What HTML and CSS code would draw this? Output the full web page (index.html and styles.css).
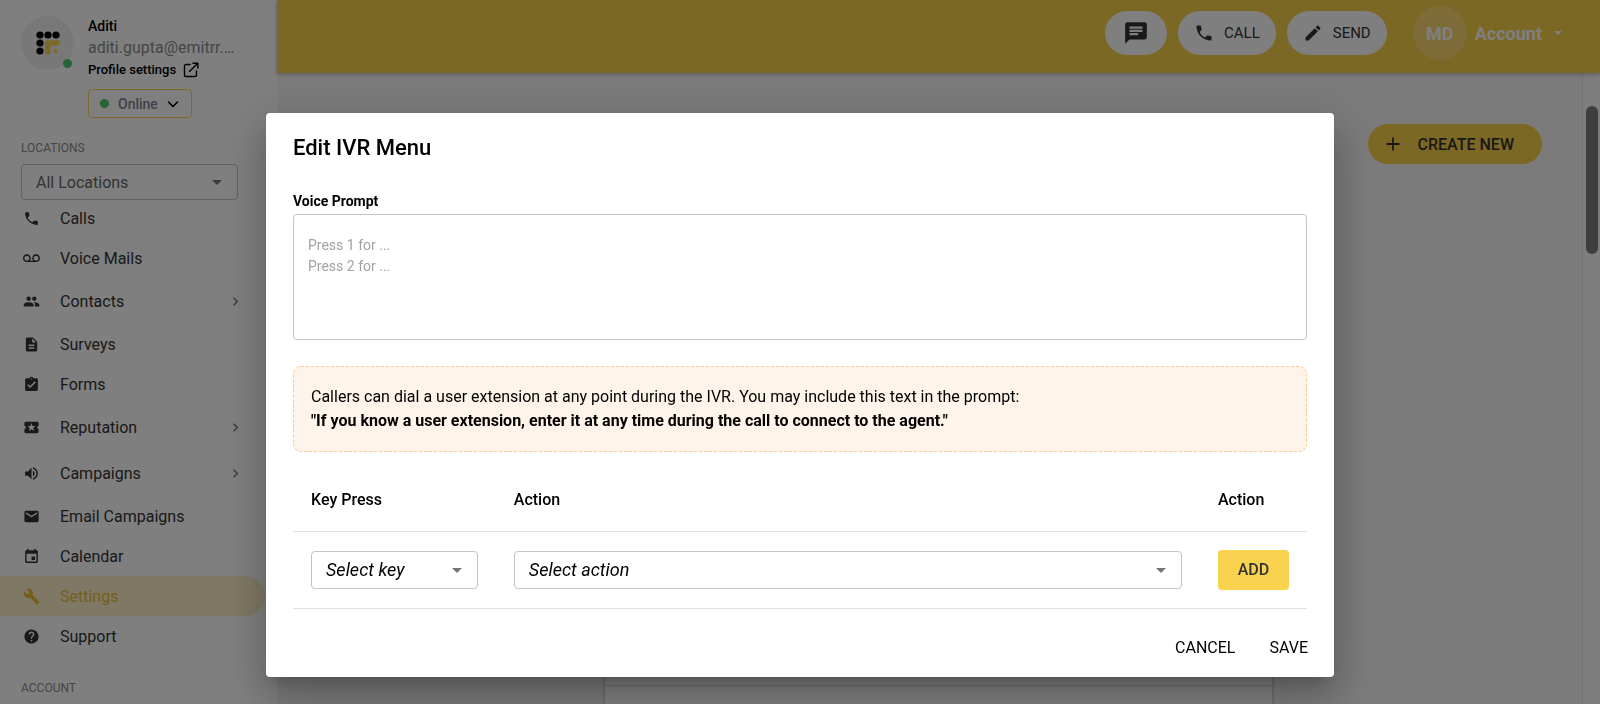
FILE: index.html
```html
<!DOCTYPE html>
<html lang="en">
<head>
<meta charset="utf-8">
<title>Edit IVR Menu</title>
<link rel="stylesheet" href="styles.css">
</head>
<body>
<div class="app">
  <aside class="sidebar">
    <div class="profile">
      <div class="avatar">
        <svg width="24" height="24" viewBox="0 0 24 24" aria-hidden="true">
          <g fill="#000"><circle cx="4" cy="4" r="3.600"/><circle cx="12" cy="4" r="3.600"/><circle cx="20" cy="4" r="3.600"/><circle cx="4" cy="12" r="3.600"/><circle cx="4" cy="20" r="3.600"/></g>
          <path d="M11.800 20.700V12H21" fill="none" stroke="#f9d24e" stroke-width="5.400" stroke-linecap="round" stroke-linejoin="round"/>
          <circle cx="19.500" cy="20" r="2" fill="#f9d24e"/>
        </svg>
        <span class="presence"></span>
      </div>
      <div class="profile-info">
        <span class="profile-name">Aditi</span>
        <span class="profile-email">aditi.gupta@emitrr.…</span>
        <a class="profile-link" href="#">Profile settings
          <svg width="16" height="16" viewBox="0 0 16 16" fill="none" stroke="currentColor" stroke-width="1.400" stroke-linecap="round" stroke-linejoin="round" aria-hidden="true"><path d="M7 2.500H3A1.500 1.500 0 0 0 1.500 4v9A1.500 1.500 0 0 0 3 14.500h9a1.500 1.500 0 0 0 1.500-1.500V9M10 1.200h4.800V6M14.500 1.500 6.500 9.500"/></svg>
        </a>
        <button class="status" type="button"><span class="dot"></span>Online
          <svg width="12" height="12" viewBox="0 0 12 12" fill="none" stroke="#000" stroke-width="1.600" stroke-linecap="round" stroke-linejoin="round" aria-hidden="true"><path d="M1.500 4 6 8.500 10.500 4"/></svg>
        </button>
      </div>
    </div>
    <label class="section-title" for="location">LOCATIONS</label>
    <div class="select location">
      <select id="location"><option>All Locations</option></select>
      <svg width="24" height="24" viewBox="0 0 24 24" aria-hidden="true"><path d="m7 10 5 5 5-5z"/></svg>
    </div>
    <nav class="nav">
      <a href="#"><svg viewBox="0 0 24 24"><path d="M6.620 10.790c1.440 2.830 3.760 5.140 6.590 6.590l2.200-2.200c.27-.27.67-.36 1.020-.24 1.120.37 2.330.57 3.570.57.55 0 1 .45 1 1V20c0 .55-.45 1-1 1-9.390 0-17-7.610-17-17 0-.55.45-1 1-1h3.500c.55 0 1 .45 1 1 0 1.250.2 2.450.57 3.570.11.35.03.74-.25 1.020z"/></svg>Calls</a>
      <a href="#"><svg viewBox="0 0 24 24"><path d="M18.500 6C15.460 6 13 8.460 13 11.500c0 1.330.47 2.550 1.260 3.500H9.740c.79-.95 1.260-2.170 1.260-3.500C11 8.460 8.540 6 5.500 6S0 8.460 0 11.500 2.460 17 5.500 17h13c3.040 0 5.500-2.460 5.500-5.500S21.540 6 18.500 6m-13 9C3.570 15 2 13.430 2 11.500S3.570 8 5.500 8 9 9.570 9 11.500 7.430 15 5.500 15m13 0c-1.930 0-3.500-1.570-3.500-3.500S16.570 8 18.500 8 22 9.570 22 11.500 20.430 15 18.500 15"/></svg>Voice Mails</a>
      <a href="#" class="group"><svg viewBox="0 0 24 24"><path d="M16 11c1.660 0 2.990-1.340 2.990-3S17.660 5 16 5s-3 1.340-3 3 1.340 3 3 3m-8 0c1.660 0 2.990-1.340 2.990-3S9.660 5 8 5 5 6.340 5 8s1.340 3 3 3m0 2c-2.330 0-7 1.170-7 3.500V19h14v-2.500c0-2.330-4.670-3.500-7-3.500m8 0c-.29 0-.62.02-.97.05 1.160.84 1.970 1.970 1.970 3.450V19h6v-2.500c0-2.330-4.670-3.500-7-3.500"/></svg>Contacts<svg class="chevron" viewBox="0 0 24 24"><path d="M10 6 8.590 7.410 13.170 12l-4.580 4.590L10 18l6-6z"/></svg></a>
      <a href="#"><svg viewBox="0 0 24 24"><path d="M14 2H6c-1.100 0-1.990.9-1.990 2L4 20c0 1.100.89 2 1.990 2H18c1.100 0 2-.9 2-2V8zm2 16H8v-2h8zm0-4H8v-2h8zm-3-5V3.500L18.500 9z"/></svg>Surveys</a>
      <a href="#"><svg viewBox="0 0 24 24"><path d="M19 3h-4.180C14.400 1.840 13.300 1 12 1s-2.400.84-2.820 2H5c-1.100 0-2 .9-2 2v14c0 1.100.9 2 2 2h14c1.100 0 2-.9 2-2V5c0-1.100-.9-2-2-2m-7 0c.55 0 1 .45 1 1s-.45 1-1 1-1-.45-1-1 .45-1 1-1m-2 14-4-4 1.410-1.410L10 14.170l6.590-6.590L18 9z"/></svg>Forms</a>
      <a href="#" class="group"><svg viewBox="0 0 24 24"><path d="M20 12c0-1.100.9-2 2-2V6c0-1.100-.9-2-2-2H4c-1.100 0-1.990.9-1.990 2v4c1.100 0 1.990.9 1.990 2s-.89 2-2 2v4c0 1.100.9 2 2 2h16c1.100 0 2-.9 2-2v-4c-1.100 0-2-.9-2-2m-4.420 4.800L12 14.500l-3.580 2.300 1.080-4.120-3.290-2.690 4.240-.25L12 5.800l1.540 3.950 4.240.25-3.290 2.690z"/></svg>Reputation<svg class="chevron" viewBox="0 0 24 24"><path d="M10 6 8.590 7.410 13.170 12l-4.580 4.590L10 18l6-6z"/></svg></a>
      <a href="#" class="group"><svg viewBox="0 0 24 24"><path d="M3 9v6h4l5 5V4L7 9zm13.500 3c0-1.770-1.020-3.290-2.500-4.030v8.050c1.480-.73 2.500-2.250 2.500-4.020M14 3.230v2.060c2.890.86 5 3.540 5 6.710s-2.110 5.850-5 6.710v2.060c4.010-.91 7-4.490 7-8.770s-2.990-7.860-7-8.770"/></svg>Campaigns<svg class="chevron" viewBox="0 0 24 24"><path d="M10 6 8.590 7.410 13.170 12l-4.580 4.590L10 18l6-6z"/></svg></a>
      <a href="#"><svg viewBox="0 0 24 24"><path d="M20 4H4c-1.100 0-1.990.9-1.990 2L2 18c0 1.100.9 2 2 2h16c1.100 0 2-.9 2-2V6c0-1.100-.9-2-2-2m0 4-8 5-8-5V6l8 5 8-5z"/></svg>Email Campaigns</a>
      <a href="#"><svg viewBox="0 0 24 24"><path d="M17 12h-5v5h5zM16 1v2H8V1H6v2H5c-1.110 0-1.990.9-1.990 2L3 19c0 1.100.89 2 2 2h14c1.100 0 2-.9 2-2V5c0-1.100-.9-2-2-2h-1V1zm3 18H5V8h14z"/></svg>Calendar</a>
      <a href="#" class="active"><svg viewBox="0 0 24 24"><path d="m22.700 19-9.100-9.100c.9-2.300.4-5-1.500-6.900-2-2-5-2.400-7.400-1.300L9 6 6 9 1.600 4.700C.4 7.100.9 10.100 2.900 12.100c1.900 1.900 4.600 2.400 6.900 1.500l9.100 9.100c.4.400 1 .4 1.400 0l2.300-2.300c.5-.4.5-1.100.1-1.400"/></svg>Settings</a>
      <a href="#"><svg viewBox="0 0 24 24"><path d="M12 2C6.480 2 2 6.480 2 12s4.480 10 10 10 10-4.480 10-10S17.520 2 12 2m1 17h-2v-2h2zm2.070-7.750-.9.920C13.450 12.900 13 13.500 13 15h-2v-.5c0-1.100.45-2.100 1.170-2.830l1.240-1.260c.37-.36.59-.86.59-1.410 0-1.100-.9-2-2-2s-2 .9-2 2H8c0-2.210 1.790-4 4-4s4 1.790 4 4c0 .88-.36 1.680-.93 2.250"/></svg>Support</a>
    </nav>
    <span class="section-title account-title">ACCOUNT</span>
  </aside>

  <div class="page">
    <header class="topbar">
      <button class="pill messages" type="button" aria-label="Messages"><svg width="26" height="26" viewBox="0 0 24 24" aria-hidden="true"><path d="M20 2H4c-1.100 0-1.990.9-1.990 2L2 22l4-4h14c1.100 0 2-.9 2-2V4c0-1.100-.9-2-2-2M6 9h12v2H6zm8 5H6v-2h8zm4-6H6V6h12z"/></svg></button>
      <button class="pill" type="button"><svg width="20" height="20" viewBox="0 0 24 24" aria-hidden="true"><path d="M6.620 10.790c1.440 2.830 3.760 5.140 6.590 6.590l2.200-2.200c.27-.27.67-.36 1.020-.24 1.120.37 2.330.57 3.570.57.55 0 1 .45 1 1V20c0 .55-.45 1-1 1-9.390 0-17-7.610-17-17 0-.55.45-1 1-1h3.500c.55 0 1 .45 1 1 0 1.250.2 2.450.57 3.570.11.35.03.74-.25 1.020z"/></svg>CALL</button>
      <button class="pill" type="button"><svg width="20" height="20" viewBox="0 0 24 24" aria-hidden="true"><path d="M3 17.250V21h3.750L17.810 9.940l-3.750-3.750zM20.710 7.040c.39-.39.39-1.020 0-1.410l-2.340-2.340a.996.996 0 0 0-1.410 0l-1.830 1.830 3.750 3.750z"/></svg>SEND</button>
      <button class="account" type="button"><span class="initials">MD</span>Account
        <svg width="8" height="4" viewBox="0 0 8 4" aria-hidden="true"><path d="M0 0h8L4 4z"/></svg>
      </button>
    </header>
    <main class="content">
      <button class="create" type="button"><svg width="22" height="22" viewBox="0 0 24 24" aria-hidden="true"><path d="M19 13h-6v6h-2v-6H5v-2h6V5h2v6h6v2z"/></svg>CREATE NEW</button>
      <div class="card"><div class="card-head"></div></div>
      <div class="scrollbar"><div class="thumb"></div></div>
    </main>
  </div>
</div>

<div class="backdrop">
  <div class="dialog" role="dialog" aria-modal="true" aria-labelledby="dialog-title">
    <h2 id="dialog-title">Edit IVR Menu</h2>
    <label class="field-label" for="prompt">Voice Prompt</label>
    <textarea id="prompt" placeholder="Press 1 for ...&#10;Press 2 for ..."></textarea>
    <div class="note">
      <p>Callers can dial a user extension at any point during the IVR. You may include this text in the prompt:</p>
      <p><strong>"If you know a user extension, enter it at any time during the call to connect to the agent."</strong></p>
    </div>
    <table class="keys">
      <thead>
        <tr><th class="col-key">Key Press</th><th>Action</th><th class="col-add">Action</th></tr>
      </thead>
      <tbody>
        <tr>
          <td><div class="select"><select aria-label="Key press"><option>Select key</option></select><svg width="24" height="24" viewBox="0 0 24 24" aria-hidden="true"><path d="m7 10 5 5 5-5z"/></svg></div></td>
          <td><div class="select"><select aria-label="Action"><option>Select action</option></select><svg width="24" height="24" viewBox="0 0 24 24" aria-hidden="true"><path d="m7 10 5 5 5-5z"/></svg></div></td>
          <td><button class="add" type="button">ADD</button></td>
        </tr>
      </tbody>
    </table>
    <div class="actions">
      <button type="button">CANCEL</button>
      <button type="button">SAVE</button>
    </div>
  </div>
</div>
</body>
</html>
```

FILE: styles.css
```css
* { box-sizing: border-box; }

body {
  margin: 0;
  font-family: Roboto, "Liberation Sans", sans-serif;
  font-size: 16px;
  color: #000;
}

button, select, textarea { font: inherit; color: inherit; margin: 0; }
button { border: 0; background: none; padding: 0; }
a { color: inherit; text-decoration: none; }
svg { flex: none; fill: currentColor; }

.app { display: flex; height: 100vh; overflow: hidden; }

/* Sidebar */
.sidebar {
  flex: none;
  display: flex;
  flex-direction: column;
  width: 277px;
  overflow: hidden;
  background: #fff;
}

.profile { display: flex; gap: 14px; padding: 16px 20px 0 21px; }

.avatar {
  position: relative;
  flex: none;
  display: flex;
  align-items: center;
  justify-content: center;
  width: 53px;
  height: 54px;
  border-radius: 50%;
  background: #f0f0f0;
}

.presence {
  position: absolute;
  right: 2px;
  bottom: 2px;
  width: 9px;
  height: 9px;
  border-radius: 50%;
  background: #4cca6b;
}

.profile-info { display: flex; flex-direction: column; align-items: flex-start; min-width: 0; }
.profile-name { font-size: 14px; font-weight: 500; line-height: 20px; }
.profile-email { white-space: nowrap; line-height: 24px; color: #8c8c8c; }
.profile-link {
  display: flex;
  align-items: center;
  gap: 7px;
  font-size: 13px;
  font-weight: 500;
  line-height: 20px;
}
.profile-link svg { fill: none; }

.status {
  display: flex;
  align-items: center;
  gap: 9px;
  height: 29px;
  margin-top: 9px;
  padding: 0 12px 0 11px;
  border: 1px solid #f9d24e;
  border-radius: 4px;
  font-size: 14px;
  font-weight: 500;
  color: #7d8492;
}
.status svg { fill: none; }
.dot { width: 9px; height: 9px; border-radius: 50%; background: #4cca6b; }

.section-title { padding-left: 21px; font-size: 12px; line-height: 16px; color: #8c8c8c; }
.profile + .section-title { margin-top: 22px; }

.select { display: grid; align-items: center; }
.select select, .select svg { grid-area: 1 / 1; }
.select select {
  appearance: none;
  width: 100%;
  height: 38px;
  padding: 0 40px 0 14px;
  border: 1px solid #c4c4c4;
  border-radius: 4px;
  background: transparent;
}
.select svg { justify-self: end; margin-right: 9px; color: #757575; pointer-events: none; }

.location { margin: 8px 39px 0 21px; }
.location select { height: 36px; color: #666; }

.nav { display: flex; flex-direction: column; margin: -2px 12px 0 0; }
.nav a {
  display: flex;
  align-items: center;
  gap: 20px;
  height: 40px;
  padding: 0 21px 0 23px;
  border-radius: 0 20px 20px 0;
  color: #333;
}
.nav svg { width: 17px; height: 17px; }
.nav .group { height: 46px; }
.nav .chevron { margin-left: auto; color: #757575; }
.nav .active { background: #fff0c9; color: #e9bd38; }
.account-title { margin-top: 24px; }

/* Page */
.page { flex: 1; display: flex; flex-direction: column; min-width: 0; }

.topbar {
  z-index: 1;
  display: flex;
  align-items: center;
  justify-content: flex-end;
  gap: 11px;
  height: 73px;
  padding: 0 38px 7px 0;
  background: #f9d04a;
  box-shadow: 0 1px 4px rgba(0, 0, 0, .3);
}

.pill {
  display: flex;
  align-items: center;
  gap: 10px;
  height: 44px;
  padding: 0 16px;
  border-radius: 22px;
  background: #fff;
  font-size: 15px;
  color: #333;
}
.messages { padding: 0 18px; }

.account {
  display: flex;
  align-items: center;
  gap: 8px;
  margin-left: 15px;
  font-size: 18px;
  font-weight: 700;
  color: #fff;
}
.account svg { margin-left: 4px; }
.initials {
  display: flex;
  align-items: center;
  justify-content: center;
  width: 54px;
  height: 54px;
  border-radius: 50%;
  background: #fbd86f;
}

.content {
  position: relative;
  flex: 1;
  display: flex;
  flex-direction: column;
  min-height: 0;
  padding-top: 51px;
  background: #f6f6f6;
}

.create {
  align-self: flex-end;
  display: flex;
  align-items: center;
  gap: 14px;
  height: 40px;
  margin-right: 58px;
  padding: 0 28px 0 14px;
  border-radius: 20px;
  background: #f9d04a;
  font-weight: 500;
  color: #333;
}

.card {
  flex: 1;
  align-self: center;
  width: 667px;
  margin-top: 36px;
  background: #fff;
  box-shadow: 0 0 4px rgba(0, 0, 0, .3);
}
.card-head { height: 486px; border-bottom: 1px solid #ddd; }

.scrollbar {
  position: absolute;
  inset: 0 0 0 auto;
  width: 18px;
  padding: 33px 2px 0 3px;
  border-left: 1px solid #e4e4e4;
  background: #fafafa;
}
.thumb { height: 148px; border-radius: 6px; background: #7c7c7c; }

/* Dialog */
.backdrop {
  position: fixed;
  inset: 0;
  z-index: 2;
  display: flex;
  align-items: flex-start;
  justify-content: center;
  padding-top: 113px;
  overflow: hidden;
  background: rgba(0, 0, 0, .5);
}

.dialog {
  display: flex;
  flex-direction: column;
  width: 66.75%;
  padding: 19px 27px 9px;
  border-radius: 4px;
  background: #fff;
  box-shadow: 0 11px 15px -7px rgba(0, 0, 0, .2), 0 24px 38px 3px rgba(0, 0, 0, .14), 0 9px 46px 8px rgba(0, 0, 0, .12);
}

.dialog h2 { margin: 0; font-size: 22px; font-weight: 500; line-height: 32px; }
.field-label { margin: 27px 0 3px; font-size: 14px; font-weight: 700; line-height: 20px; }

.dialog textarea {
  display: block;
  width: 100%;
  height: 126px;
  padding: 20px 14px;
  border: 1px solid #c4c4c4;
  border-radius: 4px;
  resize: none;
  font-size: 14px;
  line-height: 21px;
}
.dialog textarea::placeholder { color: #a2a2a2; }

.note {
  margin-top: 26px;
  padding: 18px 17px;
  border: 1px dashed #fdcb93;
  border-radius: 8px;
  background: #fff4ea;
}
.note p { margin: 0; line-height: 24px; }

.keys { width: 100%; margin-top: 16px; border-collapse: collapse; table-layout: fixed; }
.keys th { height: 63px; padding: 0 18px; text-align: left; font-weight: 500; border-bottom: 1px solid #e0e0e0; }
.keys td { padding: 18px; border-bottom: 1px solid #e0e0e0; }
.col-key { width: 20%; }
.col-add { width: 107px; }
.keys select { font-size: 18px; font-style: italic; }

.add {
  display: block;
  width: 100%;
  height: 40px;
  border-radius: 4px;
  background: #f9d34f;
  font-weight: 500;
  color: #333;
}

.actions { display: flex; justify-content: flex-end; gap: 18px; margin: 19px -9px 0 0; }
.actions button { height: 40px; padding: 0 8px; }
```
